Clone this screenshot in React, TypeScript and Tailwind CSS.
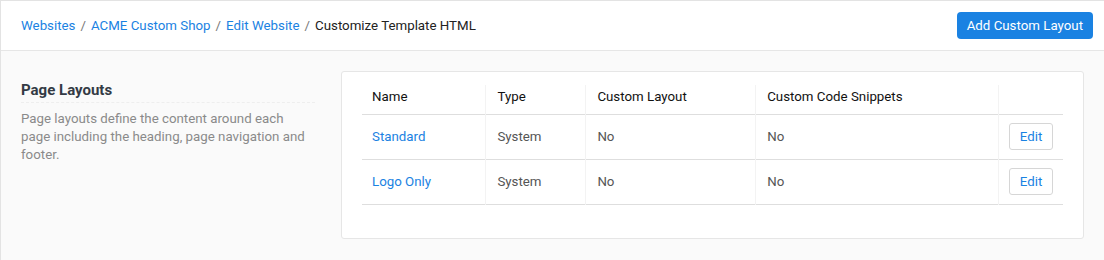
import React from "react";

const rows = [
  { name: "Standard", type: "System", customLayout: "No", snippets: "No" },
  { name: "Logo Only", type: "System", customLayout: "No", snippets: "No" },
];

export default function App() {
  return (
    <div className="min-h-[260px] bg-[#fafafa] border-l border-t border-[#e3e3e3] font-['Roboto',sans-serif] text-[13.3px]">
      {/* header / breadcrumb */}
      <div className="h-[50px] bg-white border-b border-[#e6e6e6] pl-[20px] pr-[11px] flex items-center justify-between">
        <nav className="flex items-center gap-[5px] text-[13.3px]">
          <a className="text-[#1a82e2]">Websites</a>
          <span className="text-[#777]">/</span>
          <a className="text-[#1a82e2]">ACME Custom Shop</a>
          <span className="text-[#777]">/</span>
          <a className="text-[#1a82e2]">Edit Website</a>
          <span className="text-[#777]">/</span>
          <span className="text-[#222]">Customize Template HTML</span>
        </nav>
        <button className="h-[27px] px-[10px] rounded-[4px] bg-[#1a82e2] text-white text-[13.3px]">
          Add Custom Layout
        </button>
      </div>

      {/* body */}
      <div className="flex gap-[26px] pl-[20px] pr-[20px] pt-[20px] pb-[21px]">
        <div className="w-[294px] shrink-0 pt-[9px]">
          <h2 className="text-[15px] font-bold text-[#333a45] leading-[20px] pb-[2px] border-b border-dashed border-[#eeeeee]">
            Page Layouts
          </h2>
          <p className="mt-[7px] text-[13.3px] leading-[18px] text-[#8a8a8a]">
            Page layouts define the content around each page including the heading, page navigation and footer.
          </p>
        </div>

        <div className="flex-1 bg-white border border-[#e6e6e6] rounded-[3px] px-[20px] pt-[13px] pb-[33px]">
          <table className="w-full text-left border-collapse">
            <thead>
              <tr className="border-b border-[#dedede] text-[#111]">
                <th className="w-[124px] h-[29px] px-[10px] pb-[5px] font-normal border-r border-[#f3f3f3]">Name</th>
                <th className="w-[100px] px-[11px] pb-[5px] font-normal border-r border-[#f3f3f3]">Type</th>
                <th className="w-[170px] px-[11px] pb-[5px] font-normal border-r border-[#f3f3f3]">Custom Layout</th>
                <th className="w-[243px] px-[11px] pb-[5px] font-normal border-r border-[#f3f3f3]">Custom Code Snippets</th>
                <th className="px-[10px] pb-[5px] font-normal"></th>
              </tr>
            </thead>
            <tbody>
              {rows.map((r) => (
                <tr key={r.name} className="border-b border-[#dedede] text-[#555]">
                  <td className="h-[45px] px-[10px] border-r border-[#f3f3f3]">
                    <a className="text-[#1a82e2]">{r.name}</a>
                  </td>
                  <td className="px-[11px] border-r border-[#f3f3f3]">{r.type}</td>
                  <td className="px-[11px] border-r border-[#f3f3f3]">{r.customLayout}</td>
                  <td className="px-[11px] border-r border-[#f3f3f3]">{r.snippets}</td>
                  <td className="px-[10px] text-right">
                    <button className="h-[27px] w-[44px] rounded-[3px] border border-[#d6d6d6] bg-white text-[#1a82e2] text-[13.3px]">
                      Edit
                    </button>
                  </td>
                </tr>
              ))}
            </tbody>
          </table>
        </div>
      </div>
    </div>
  );
}
